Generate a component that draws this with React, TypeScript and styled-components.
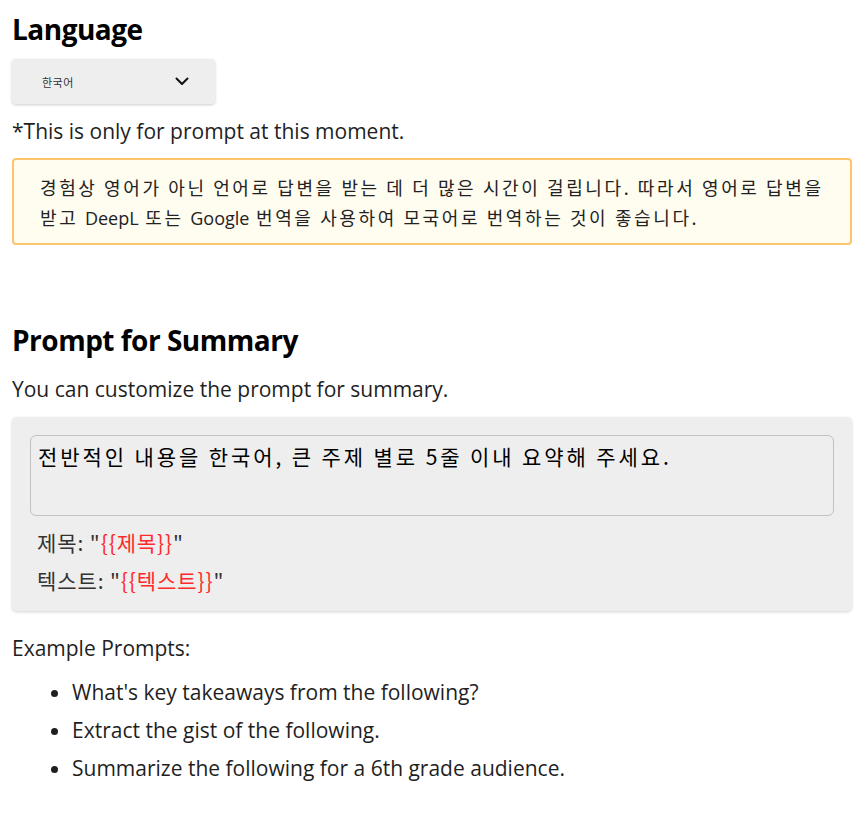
import React from "react";
import styled, { createGlobalStyle } from "styled-components";

const Global = createGlobalStyle`
  html, body { margin: 0; padding: 0; background: #ffffff; }
  body {
    font-family: "Open Sans", "Noto Sans CJK KR", sans-serif;
    color: #1f1f1f;
  }
`;

const Page = styled.div`
  padding: 12px 12px 30px 12px;
  display: flex;
  flex-direction: column;
  align-items: stretch;
  width: 840px;
`;

const Heading = styled.h2<{ $top?: number }>`
  margin: ${(p) => p.$top ?? 0}px 0 0 0;
  font-family: "Open Sans", "Noto Sans CJK KR", sans-serif;
  font-size: 28px;
  line-height: 34px;
  font-weight: 700;
  color: #000;
  letter-spacing: -0.5px;
`;

const Text = styled.p<{ $top?: number }>`
  margin: ${(p) => p.$top ?? 0}px 0 0 0;
  font-size: 21px;
  line-height: 30px;
  color: #1f1f1f;
`;

const Select = styled.button`
  margin-top: 13px;
  width: 203px;
  height: 45px;
  border: none;
  border-radius: 4px;
  background: #eeeeee;
  box-shadow: 0 1px 3px rgba(0, 0, 0, 0.2);
  display: flex;
  align-items: center;
  justify-content: space-between;
  padding: 0 26px 0 30px;
  font-family: "Noto Sans CJK KR", sans-serif;
  font-size: 11px;
  letter-spacing: 0.5px;
  color: #333;
  cursor: pointer;
`;

const Warning = styled.div`
  margin-top: 12px;
  border: 2px solid #fcc46e;
  border-radius: 4px;
  background: #fffcf0;
  padding: 12px 20px 11px 26px;
  font-family: "Noto Sans CJK KR", sans-serif;
  font-size: 18px;
  line-height: 30px;
  color: #222;
  letter-spacing: 2.6px;
`;

const Latin = styled.span`
  font-family: "Open Sans", sans-serif;
  letter-spacing: 0;
  line-height: 1;
`;

const PromptCard = styled.div`
  margin-top: 13px;
  background: #eeeeee;
  border-radius: 5px;
  box-shadow: 0 1px 3px rgba(0, 0, 0, 0.18);
  padding: 18px 18px 16px 18px;
  display: flex;
  flex-direction: column;
`;

const PromptArea = styled.textarea`
  height: 81px;
  box-sizing: border-box;
  border: 1px solid #c2c2c2;
  border-radius: 6px;
  background: transparent;
  padding: 5px 7px;
  font-family: "Noto Sans CJK KR", sans-serif;
  font-size: 21px;
  line-height: 30px;
  color: #000;
  resize: none;
  outline: none;
  letter-spacing: 2.9px;
`;

const VarLine = styled.div<{ $top: number }>`
  margin-top: ${(p) => p.$top}px;
  padding-left: 7px;
  font-family: "Noto Sans CJK KR", sans-serif;
  font-size: 21px;
  line-height: 30px;
  color: #333;
  letter-spacing: 0.9px;
`;

const Var = styled.span`
  color: #ff2a2a;
`;

const List = styled.ul`
  margin: 14px 0 0 0;
  padding-left: 60px;
  display: flex;
  flex-direction: column;
  gap: 8px;
`;

const Item = styled.li`
  font-size: 21px;
  line-height: 30px;
  color: #1f1f1f;
`;

const Chevron = () => (
  <svg width="14" height="9" viewBox="0 0 14 9" fill="none">
    <path d="M1.5 1.5 L7 7 L12.5 1.5" stroke="#111" strokeWidth="2" strokeLinecap="round" strokeLinejoin="round" />
  </svg>
);

export default function App() {
  return (
    <>
      <Global />
      <Page>
        <Heading>Language</Heading>
        <Select>
          <span>한국어</span>
          <Chevron />
        </Select>
        <Text $top={12}>*This is only for prompt at this moment.</Text>
        <Warning>
          경험상 영어가 아닌 언어로 답변을 받는 데 더 많은 시간이 걸립니다. 따라서 영어로 답변을 받고 <Latin>DeepL</Latin> 또는 <Latin>Google</Latin> 번역을 사용하여 모국어로 번역하는 것이 좋습니다.
        </Warning>
        <Heading $top={78}>Prompt for Summary</Heading>
        <Text $top={17}>You can customize the prompt for summary.</Text>
        <PromptCard>
          <PromptArea defaultValue="전반적인 내용을 한국어, 큰 주제 별로 5줄 이내 요약해 주세요." />
          <VarLine $top={11}>
            제목: "<Var>{"{{제목}}"}</Var>"
          </VarLine>
          <VarLine $top={8}>
            텍스트: "<Var>{"{{텍스트}}"}</Var>"
          </VarLine>
        </PromptCard>
        <Text $top={22}>Example Prompts:</Text>
        <List>
          <Item>What's key takeaways from the following?</Item>
          <Item>Extract the gist of the following.</Item>
          <Item>Summarize the following for a 6th grade audience.</Item>
        </List>
      </Page>
    </>
  );
}
